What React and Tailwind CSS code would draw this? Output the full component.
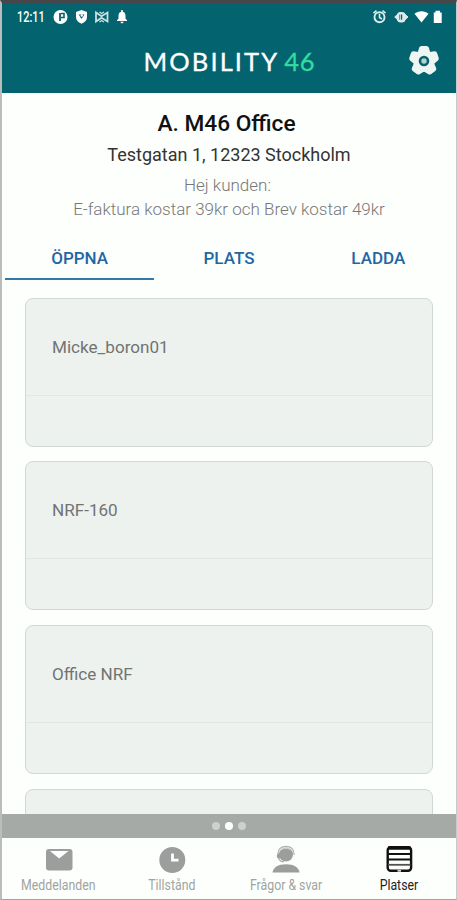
const tabs = ['ÖPPNA', 'PLATS', 'LADDA'];

const places = ['Micke_boron01', 'NRF-160', 'Office NRF', ''];

const MailIcon = () => (
    <svg width="28" height="28" viewBox="0 0 28 28">
        <rect x="1" y="4" width="26.500" height="21.500" rx="3" fill="#9b9e9c" />
        <path d="M5 6H23.500L14.200 13.500Z" fill="#fdfffd" />
    </svg>
);

const ClockIcon = () => (
    <svg width="28" height="28" viewBox="0 0 28 28">
        <circle cx="14.300" cy="15" r="13" fill="#9b9e9c" />
        <path d="M14.500 8.500V15.200H20.500" fill="none" stroke="#fdfffd" strokeWidth="2.800" />
    </svg>
);

const SupportIcon = () => (
    <svg width="28" height="28" viewBox="0 0 28 28">
        <circle cx="14" cy="9.500" r="7" fill="#9b9e9c" />
        <path d="M6 10V8.500C6.500 3 10 1.300 14 1.300S21.500 3 22 8.500V10" fill="none" stroke="#aeb1af" strokeWidth="1.200" />
        <path d="M8.500 5.500C11 2.500 17 2.500 19.500 5.500" fill="none" stroke="#d8dbd9" strokeWidth="1" />
        <path d="M6.500 8.500C4.500 9 4 13 6.500 13.500H9V8.500Z" fill="#9b9e9c" />
        <path d="M6.500 13C7.500 16 9.500 16.800 12 16.800" fill="none" stroke="#aeb1af" strokeWidth="1.200" />
        <path d="M.5 27.500C1 22.500 6 19.200 14 19.200S27 22.500 27.500 27.500Z" fill="#9b9e9c" />
    </svg>
);

const PlacesIcon = () => (
    <svg width="28" height="28" viewBox="0 0 28 28">
        <rect x="2.700" y="2.200" width="23.400" height="23.600" rx="3" fill="#fdfffd" stroke="#111" strokeWidth="2.400" />
        <path d="M3 3H25.500" stroke="#111" strokeWidth="3.500" />
        <path d="M3 9H25.500M3 14.500H25.500" stroke="#111" strokeWidth="2.200" />
        <path d="M3 19.800H25.500" stroke="#554f53" strokeWidth="1.800" />
        <path d="M12.500 25.800H16" stroke="#d5d5d5" strokeWidth="1.800" />
    </svg>
);

const navItems = [
    { label: 'Meddelanden', Icon: MailIcon },
    { label: 'Tillstånd', Icon: ClockIcon },
    { label: 'Frågor & svar', Icon: SupportIcon },
    { label: 'Platser', Icon: PlacesIcon, active: true }
];

const StatusBar = () => (
    <div className="flex h-[25px] items-center justify-between pt-0.5 pr-[14px] pl-[15px] text-white">
        <div className="flex items-center">
            <span className="w-[35px] origin-left scale-x-[.78] pt-px text-[14px] leading-4 font-medium">12:11</span>
            <svg width="78" height="16" viewBox="0 0 78 16">
                <circle cx="8.500" cy="8" r="7" fill="#fff" />
                <path d="M8 4V12" stroke="#036470" strokeWidth="1.800" />
                <path d="M9 4.500H12V8.500H9" fill="none" stroke="#036470" strokeWidth="1.600" />
                <path d="M29.500 1L35 3V8C35 11 33 13.500 29.500 14.700C26 13.500 24 11 24 8V3Z" fill="#fff" />
                <path d="M26.700 5.500H32.500L29.500 10Z" fill="#036470" />
                <circle cx="29.800" cy="6.500" r="1.200" fill="#fff" />
                <path d="M44 3.500V12.500L49.500 8.800L55.500 12.500V3.500L49.500 7.200Z" fill="none" stroke="#c9e2e4" strokeWidth="1.800" />
                <path d="M47.500 3L49.700 4.500L52 3M47.500 13L49.700 11.500L52 13" fill="none" stroke="#c9e2e4" strokeWidth="1.200" />
                <path d="M65 12V11L66.500 9.800V7C66.500 4.500 67.500 3 69.200 2.700V1H70.800V2.700C72.500 3 73.500 4.500 73.500 7V9.800L75 11V12Z" fill="#fff" />
                <path d="M68.500 12.700H71.500C71.500 14.700 68.500 14.700 68.500 12.700Z" fill="#fff" />
            </svg>
        </div>
        <svg width="70" height="16" viewBox="0 0 70 16">
            <circle cx="7.500" cy="8.200" r="5" fill="none" stroke="#dcebec" strokeWidth="1.900" />
            <path d="M7.500 5V8.500L10 10M1.500 4.200L4.500 1.700M13.500 4.200L10.500 1.700" fill="none" stroke="#dcebec" strokeWidth="1.600" />
            <path d="M22.700 8L26 5V11ZM36 8L32.700 5V11Z" fill="#dcebec" stroke="#dcebec" strokeWidth="1" />
            <rect x="25.500" y="3.500" width="7.500" height="9.500" rx="2.500" fill="#dcebec" stroke="#dcebec" strokeWidth="1" />
            <path d="M27.500 5.500V10.700" stroke="#5d999f" strokeWidth="1" />
            <path d="M29.500 5.500V10.700" stroke="#036470" strokeWidth="1.400" />
            <path d="M42.500 4.700C46 1.300 53 1.300 56.500 4.700L49.500 13.500Z" fill="#fff" />
            <path d="M61.800 3.500H63.500V1.700H68V3.500H69.700V14H61.800Z" fill="#fff" />
        </svg>
    </div>
);

const Header = () => (
    <header className="h-[90px] shrink-0 bg-[#036470]">
        <StatusBar />
        <div className="flex h-[66px] items-center">
            <div className="w-12" />
            <h1 className="flex flex-1 items-baseline justify-center gap-[5px] pl-px font-['Lato'] text-[25.500px] leading-8 text-white">
                <span className="tracking-[2.100px] [-webkit-text-stroke:.3px_#fff]">MOBILITY</span>
                <span className="tracking-[.800px] text-[#31dc9d] [-webkit-text-stroke:.3px_#31dc9d]">46</span>
            </h1>
            <button className="w-12 pr-4" aria-label="Inställningar">
                <svg width="32" height="32" viewBox="0 0 32 32">
                    <g fill="#eef5f2" stroke="#eef5f2" strokeLinejoin="round" strokeWidth="5">
                        <path d="M13.500 3.500H18.500L20.300 9.700L26.700 8.800L28.300 13.500L23.300 17.900L25.800 23.900L21.700 27L16 23.500L10.300 27L6.200 23.900L8.700 17.900L3.700 13.500L5.300 8.800L11.700 9.700Z" />
                    </g>
                    <circle cx="16" cy="16" r="4" fill="#b7d0d1" stroke="#036470" strokeWidth="2.600" />
                </svg>
            </button>
        </div>
    </header>
);

const App = () => {
    return (
        <div className="flex h-[900px] w-[457px] flex-col overflow-hidden border-t-[3px] border-r border-b border-l-2 border-t-[#45474b] border-r-[#c5cac8] border-b-[#a0a3a2] border-l-[#b9bdbc] bg-[#fdfffd] font-['Roboto',sans-serif]">
            <Header />

            <div className="flex h-[143px] shrink-0 flex-col items-center pt-4 text-center whitespace-nowrap">
                <h2 className="pr-[5px] text-[22.700px] leading-[30px] font-medium text-[#111]">A. M46 Office</h2>
                <p className="pt-[2px] text-[18px] leading-7 text-[#333]">Testgatan 1, 12323 Stockholm</p>
                <p className="pt-1 pr-[3px] text-[17px] leading-6 font-light text-[#777]">Hej kunden:</p>
                <p className="text-[17px] leading-6 font-light text-[#777]">E-faktura kostar 39kr och Brev kostar 49kr</p>
            </div>

            <div className="grid h-[44px] shrink-0 grid-cols-3 px-[3px]">
                {tabs.map((tab, i) => (
                    <button
                        key={tab}
                        className={`border-b-2 pt-[3px] text-[17px] font-medium text-[#1f66a3] ${i === 0 ? 'border-[#3278a8]' : 'border-transparent'}`}
                    >
                        {tab}
                    </button>
                ))}
            </div>

            <main className="flex min-h-0 flex-1 flex-col gap-[14.670px] overflow-hidden pt-[17.670px] pr-[23px] pl-[23px]">
                {places.map((place, i) => (
                    <div key={i} className="h-[149px] shrink-0 rounded-lg border border-[#d0d8d4] bg-[#eef2ef]">
                        <div className="flex h-[97px] items-center border-b border-[#e1e7e3] px-[26px] pt-0.5 text-[17.100px] text-[#707472]">
                            {place}
                        </div>
                    </div>
                ))}
            </main>

            <div className="flex h-6 shrink-0 items-center justify-center gap-[5px] bg-[#a5aaa7]">
                <span className="size-2 rounded-full bg-[#cdd1ce]" />
                <span className="size-2 rounded-full bg-white" />
                <span className="size-2 rounded-full bg-[#cdd1ce]" />
            </div>

            <nav className="grid h-[61px] shrink-0 grid-cols-4">
                {navItems.map(({ label, Icon, active }) => (
                    <button key={label} className="flex flex-col items-center pt-[7px]">
                        <Icon />
                        <span className={`scale-x-[.88] pt-[3px] text-[14px] leading-[18px] whitespace-nowrap ${active ? 'text-[#222]' : 'text-[#a0a3a1]'}`}>
                            {label}
                        </span>
                    </button>
                ))}
            </nav>
        </div>
    );
};

export default App;
